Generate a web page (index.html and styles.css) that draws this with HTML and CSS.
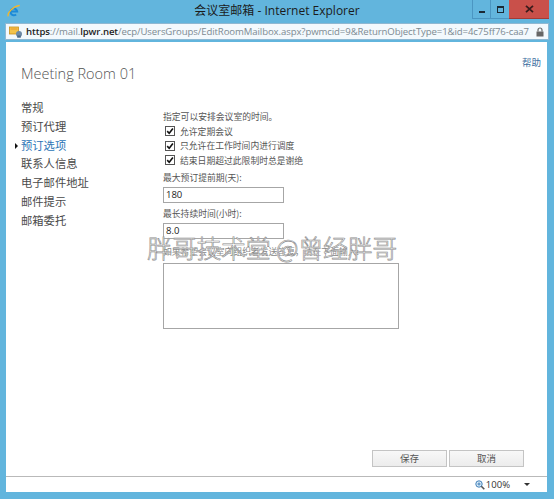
FILE: index.html
```html
<!DOCTYPE html>
<html lang="zh-CN">
<head>
<meta charset="utf-8">
<title>会议室邮箱 - Internet Explorer</title>
<link rel="stylesheet" href="styles.css">
</head>
<body>
<div class="window">
  <div class="titlebar">
    <svg class="ie-icon" width="14" height="14" viewBox="0 0 14 14">
      <path d="M3.6 7.6h6.6a3.4 3.4 0 1 0-1.1 2.8" fill="none" stroke="#1c8ad8" stroke-width="2"/>
      <path d="M1.2 12.4C0.2 9 5.5 2.5 12.8 1.4" fill="none" stroke="#f2b72e" stroke-width="1.3"/>
    </svg>
    <div class="title">会议室邮箱 - Internet Explorer</div>
    <div class="controls">
      <div class="ctl min"><span class="min-glyph"></span></div>
      <div class="ctl max"><span class="max-glyph"></span></div>
      <div class="ctl close">
        <svg width="9" height="8" viewBox="0 0 9 8"><path d="M1 0.8l7 6.4M8 0.8l-7 6.4" stroke="#3b1c1c" stroke-width="1.8"/></svg>
      </div>
    </div>
  </div>
  <div class="addressbar">
    <svg class="page-icon" width="14" height="12" viewBox="0 0 14 12">
      <rect x="0.5" y="1" width="9" height="7" fill="#f4c34a" stroke="#c98f1c" stroke-width="0.8"/>
      <rect x="1.5" y="2.5" width="7" height="1" fill="#e89a2a"/>
      <circle cx="10" cy="8" r="3" fill="#6d8aa6"/>
      <rect x="8.2" y="9.5" width="3.6" height="2.2" fill="#4a6886"/>
    </svg>
    <div class="url"><span class="dark">https</span>://mail.<span class="dark">lpwr.net</span>/ecp/UsersGroups/EditRoomMailbox.aspx?pwmcid=9&amp;ReturnObjectType=1&amp;id=4c75ff76-caa7</div>
    <svg class="lock" width="8" height="10" viewBox="0 0 8 10">
      <path d="M2 4.5V3a2 2 0 0 1 4 0v1.5" fill="none" stroke="#666" stroke-width="1.2"/>
      <rect x="0.5" y="4.5" width="7" height="5" fill="#666"/>
    </svg>
  </div>
  <div class="content">
    <div class="help-row"><span class="help">帮助</span></div>
    <div class="heading">Meeting Room 01</div>
    <div class="main">
      <ul class="nav">
        <li>常规</li>
        <li>预订代理</li>
        <li class="active">预订选项</li>
        <li>联系人信息</li>
        <li>电子邮件地址</li>
        <li>邮件提示</li>
        <li>邮箱委托</li>
      </ul>
      <div class="panel">
        <div class="intro">指定可以安排会议室的时间。</div>
        <div class="check"><span class="box"><svg width="8" height="8" viewBox="0 0 8 8"><path d="M1.2 4.1L3.2 6.2L6.9 1.4" fill="none" stroke="#111" stroke-width="1.6"/></svg></span>允许定期会议</div>
        <div class="check"><span class="box"><svg width="8" height="8" viewBox="0 0 8 8"><path d="M1.2 4.1L3.2 6.2L6.9 1.4" fill="none" stroke="#111" stroke-width="1.6"/></svg></span>只允许在工作时间内进行调度</div>
        <div class="check"><span class="box"><svg width="8" height="8" viewBox="0 0 8 8"><path d="M1.2 4.1L3.2 6.2L6.9 1.4" fill="none" stroke="#111" stroke-width="1.6"/></svg></span>结束日期超过此限制时总是谢绝</div>
        <div class="label l1">最大预订提前期(天):</div>
        <input class="field f1" type="text" value="180">
        <div class="label l2">最长持续时间(小时):</div>
        <input class="field f2" type="text" value="8.0">
        <div class="label l3">如果希望会议室向组织者发送答复，请在下面输入:</div>
        <textarea class="reply"></textarea>
      </div>
    </div>
    <div class="actions">
      <button class="btn">保存</button>
      <button class="btn">取消</button>
    </div>
    <div class="watermark">胖哥技术堂 @曾经胖哥</div>
  </div>
  <div class="statusbar">
    <svg class="zoom-icon" width="10" height="10" viewBox="0 0 10 10">
      <circle cx="4" cy="4" r="3.2" fill="#dfeefa" stroke="#3f7fb8" stroke-width="1"/>
      <path d="M2.4 4h3.2M4 2.4v3.2" stroke="#3f7fb8" stroke-width="1"/>
      <path d="M6.3 6.3L9.3 9.3" stroke="#555" stroke-width="1.6"/>
    </svg>
    <span class="zoom">100%</span>
    <span class="arrow"></span>
  </div>
</div>
</body>
</html>
```

FILE: styles.css
```css
html, body {
  margin: 0;
  padding: 0;
}
body {
  background: #62b5dd;
  font-family: "Noto Sans CJK SC", sans-serif;
}
.window {
  width: 554px;
  height: 499px;
  box-sizing: border-box;
  padding: 0 7px 7px 6px;
  display: flex;
  flex-direction: column;
  background: #62b5dd;
}
.titlebar {
  height: 22px;
  margin: 0 -7px 0 -6px;
  display: grid;
  grid-template-columns: 1fr auto 1fr;
  align-items: start;
}
.ie-icon {
  margin: 4px 0 0 7px;
}
.title {
  font-family: "Open Sans", "Noto Sans CJK SC", sans-serif;
  font-size: 12px;
  line-height: 22px;
  color: #1b1b1b;
  white-space: nowrap;
}
.controls {
  justify-self: end;
  display: flex;
  margin-right: 5px;
}
.ctl {
  height: 19px;
  box-sizing: border-box;
  display: flex;
  align-items: center;
  justify-content: center;
}
.min {
  width: 18px;
  border-left: 1px solid #4b96c2;
  border-bottom: 1px solid #4b96c2;
}
.max {
  width: 19px;
  border-left: 1px solid #4b96c2;
  border-bottom: 1px solid #4b96c2;
}
.close {
  width: 40px;
  background: #c9504a;
  border-bottom: 1px solid #a33b36;
}
.min-glyph {
  width: 6px;
  height: 2px;
  background: #1b2a36;
  margin-top: 5px;
}
.max-glyph {
  width: 5px;
  height: 4px;
  border: 1px solid #1b2a36;
  border-top-width: 2px;
}
.addressbar {
  margin: 1px -2px 0 -1px;
  height: 17px;
  box-sizing: border-box;
  border: 1px solid #8fb8d2;
  background: #f3f9fd;
  display: flex;
  align-items: center;
  padding: 0 4px 0 3px;
}
.page-icon {
  flex: none;
  margin-right: 3px;
}
.url {
  flex: 1;
  font-family: "Open Sans", sans-serif;
  font-size: 9.6px;
  color: #7d8a92;
  white-space: nowrap;
  overflow: hidden;
  letter-spacing: -0.1px;
}
.url .dark {
  color: #1e1e1e;
  font-weight: 600;
}
.lock {
  flex: none;
}
.content {
  flex: 1;
  margin-top: 2px;
  background: #fff;
  display: flex;
  flex-direction: column;
  position: relative;
  padding-top: 11px;
  padding-bottom: 9px;
  box-sizing: border-box;
}
.help-row {
  height: 12px;
  line-height: 12px;
  text-align: right;
  padding-right: 6px;
}
.help {
  font-size: 9.5px;
  color: #3d6f9f;
}
.heading {
  font-family: "Open Sans", sans-serif;
  font-weight: 300;
  font-size: 14.5px;
  line-height: 18px;
  color: #555;
  padding-left: 15px;
}
.main {
  display: flex;
  margin-top: 15px;
}
.nav {
  list-style: none;
  margin: 0;
  padding: 0 0 0 15px;
  width: 157px;
  box-sizing: border-box;
  flex: none;
}
.nav li {
  font-size: 11.3px;
  line-height: 18.75px;
  color: #4a4a4a;
  position: relative;
}
.nav li.active {
  color: #2b74b6;
}
.nav li.active::before {
  content: "";
  position: absolute;
  left: -6px;
  top: 7px;
  border-left: 3px solid #111;
  border-top: 3px solid transparent;
  border-bottom: 3px solid transparent;
}
.panel {
  margin-top: 12px;
  font-size: 8.8px;
  color: #555;
}
.intro {
  line-height: 14px;
}
.check {
  height: 14.5px;
  display: flex;
  align-items: center;
  padding-left: 2px;
}
.box {
  width: 10px;
  height: 10px;
  box-sizing: border-box;
  border: 1px solid #555;
  display: flex;
  align-items: center;
  justify-content: center;
  margin-right: 5px;
  background: #fff;
}
.label {
  line-height: 14px;
}
.l1 {
  margin-top: 3px;
}
.l2 {
  margin-top: 4px;
}
.l3 {
  margin-top: 6px;
  color: #888;
}
.field {
  display: block;
  width: 121px;
  height: 16px;
  box-sizing: border-box;
  border: 1px solid #a6a6a6;
  padding: 0 2px;
  margin: 2px 0 0;
  font-family: "Open Sans", sans-serif;
  font-size: 9.5px;
  color: #222;
  outline: none;
}
.f1 {
  margin-top: 2px;
}
.reply {
  display: block;
  width: 236px;
  height: 66px;
  box-sizing: border-box;
  border: 1px solid #a6a6a6;
  margin: 4px 0 0;
  resize: none;
  padding: 0;
}
.actions {
  margin-top: auto;
  display: flex;
  justify-content: flex-end;
  gap: 2px;
  padding-right: 23px;
}
.btn {
  width: 75px;
  height: 17px;
  box-sizing: border-box;
  border: 1px solid #c4c4c4;
  background: linear-gradient(#f8f8f8, #ececec);
  font-family: "Noto Sans CJK SC", sans-serif;
  font-size: 9.5px;
  color: #555;
  padding: 0;
  line-height: 15px;
}
.watermark {
  position: absolute;
  left: 141px;
  top: 193px;
  font-size: 25px;
  line-height: 25px;
  font-weight: 300;
  white-space: nowrap;
  color: rgba(255, 255, 255, 0.9);
  -webkit-text-stroke: 0.6px #8a8a8a;
  font-family: "Noto Sans CJK SC", sans-serif;
  letter-spacing: -0.3px;
}
.statusbar {
  height: 16px;
  box-sizing: border-box;
  border-top: 1px solid #b9b9b9;
  background: #fff;
  display: flex;
  align-items: center;
  justify-content: flex-end;
  padding-right: 17px;
}
.zoom-icon {
  margin-right: 1px;
}
.zoom {
  font-family: "Open Sans", sans-serif;
  font-size: 9.5px;
  color: #333;
}
.arrow {
  margin-left: 14px;
  border-top: 3px solid #333;
  border-left: 3px solid transparent;
  border-right: 3px solid transparent;
}
```
